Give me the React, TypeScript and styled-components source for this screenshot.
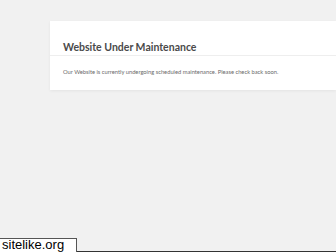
import React from 'react';
import styled, { createGlobalStyle } from 'styled-components';

const GlobalStyle = createGlobalStyle`
    html, body {
        margin: 0;
        padding: 0;
        background: #f1f1f1;
    }
    body {
        width: 336px;
        height: 252px;
        overflow: hidden;
        position: relative;
        font-family: Lato, "Open Sans", "Liberation Sans", sans-serif;
    }
`;

const Page = styled.div`
    padding: 21px 0 0 50px;
`;

const Card = styled.div`
    background: #ffffff;
    height: 69px;
    box-shadow: 0 1px 3px rgba(0, 0, 0, 0.06);
    display: flex;
    flex-direction: column;
`;

const CardHeader = styled.div`
    height: 35px;
    box-sizing: border-box;
    padding: 0 0 1px 13px;
    border-bottom: 1px solid #eeeeee;
    display: flex;
    align-items: flex-end;
`;

const Title = styled.h1`
    margin: 0;
    font-size: 10.5px;
    font-weight: 700;
    color: #4a4a4a;
    line-height: 14px;
    white-space: nowrap;
`;

const CardBody = styled.div`
    padding: 12px 0 0 13px;
`;

const Message = styled.p`
    margin: 0;
    font-size: 5.75px;
    line-height: 7px;
    color: #6a6a6a;
    white-space: nowrap;
`;

const Badge = styled.div`
    position: absolute;
    left: 0;
    bottom: 0;
    width: 77px;
    height: 14px;
    box-sizing: border-box;
    background: #ffffff;
    border: 1px solid #555555;
    border-bottom: none;
    border-left: none;
    font-family: "Liberation Sans", Arial, sans-serif;
    font-size: 13px;
    line-height: 12px;
    color: #000000;
    padding-left: 2px;
`;

const BottomLine = styled.div`
    position: absolute;
    left: 77px;
    right: 0;
    bottom: 0;
    height: 1px;
    background: #333333;
`;

export default function App() {
    return (
        <>
            <GlobalStyle />
            <Page>
                <Card>
                    <CardHeader>
                        <Title>Website Under Maintenance</Title>
                    </CardHeader>
                    <CardBody>
                        <Message>
                            Our Website is currently undergoing scheduled maintenance. Please check back soon.
                        </Message>
                    </CardBody>
                </Card>
            </Page>
            <Badge>sitelike.org</Badge>
            <BottomLine />
        </>
    );
}
